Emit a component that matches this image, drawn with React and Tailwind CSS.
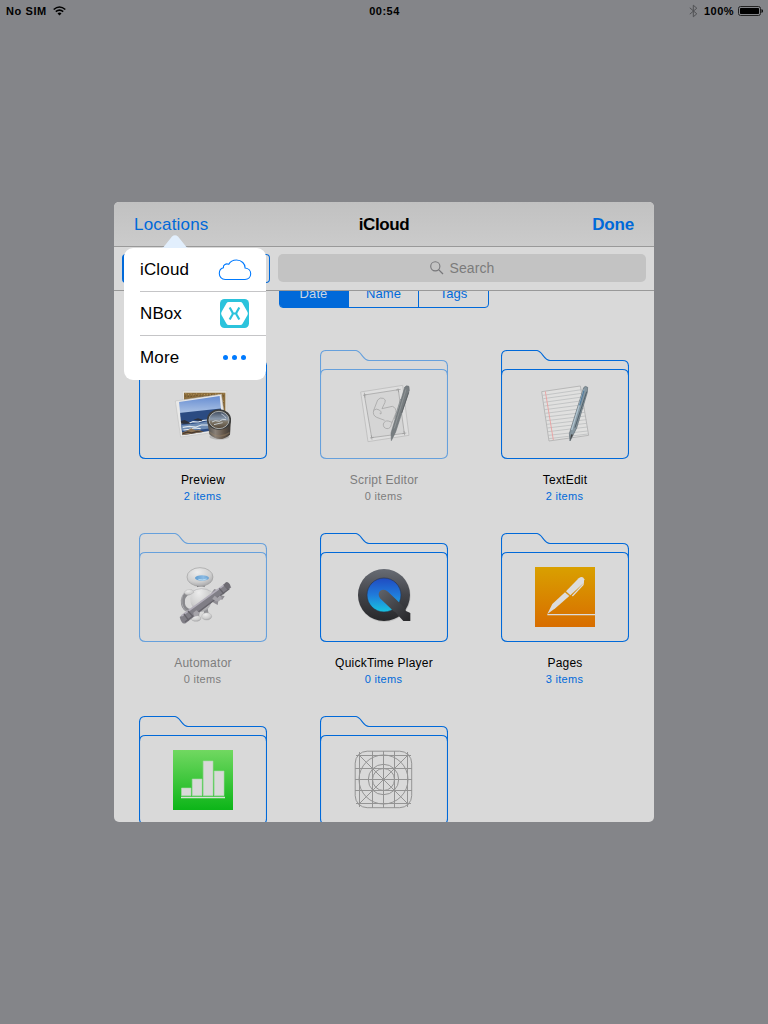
import React from "react";

function FolderShape({ faded, children }) {
  return (
    <svg width="128" height="110" viewBox="0 0 128 110" fill="none" className="block">
      <g stroke={faded ? "#66a0dc" : "#0069d9"} strokeWidth="1.1">
        <path d="M.5 25V6.500Q.5 .5 6.500 .5H35.500C41.500 .5 42.500 10.500 49 10.500H121.500Q127.500 10.500 127.500 16.500V25" />
        <path d="M.5 25.500Q.5 19.500 6.500 19.500H121.500Q127.500 19.500 127.500 25.500V102.500Q127.500 108.500 121.500 108.500H6.500Q.5 108.500 .5 102.500Z" />
      </g>
      {children}
    </svg>
  );
}

function Preview() {
  return (
    <g transform="translate(-9 -10) scale(.33333)">
      <defs>
        <linearGradient id="sky" x1="0" y1="0" x2="0" y2="1">
          <stop offset="0" stopColor="#5b84cf" />
          <stop offset="1" stopColor="#b9cde8" />
        </linearGradient>
        <linearGradient id="loupe" x1="0" y1="0" x2="1" y2="0">
          <stop offset="0" stopColor="#4a4a48" />
          <stop offset=".35" stopColor="#8a8178" />
          <stop offset=".7" stopColor="#625548" />
          <stop offset="1" stopColor="#3b3835" />
        </linearGradient>
        <linearGradient id="glass" x1="0" y1="0" x2="0" y2="1">
          <stop offset="0" stopColor="#3f4a5c" />
          <stop offset=".45" stopColor="#8c9cb0" />
          <stop offset=".6" stopColor="#7f7768" />
          <stop offset="1" stopColor="#54483a" />
        </linearGradient>
        <clipPath id="photo"><path d="M147 186L269 168L279 266L157 286Z" /></clipPath>
      </defs>
      <path d="M157 153L290 152L291 250L160 250Z" fill="#e6e4df" stroke="#c2c2c0" />
      <path d="M162 158H286V245H162Z" fill="#8a6c3c" />
      <path d="M166 160l8 4 7-4 8 5 10-4 8 5 11-5 9 4 10-4 10 5 12-5 10 3 14-3M265 172l8 5 8-3M269 186l10-3 6 5M276 200l8-3" stroke="#b8985c" strokeWidth="3" strokeDasharray="4 5" />
      <path d="M164 168l18 2 20-4 22 4 20-5 38 3M272 178l10 12M274 192l9 8" stroke="#5c4728" strokeWidth="3" strokeDasharray="3 6" />
      <path d="M136 183L274 163L290 272L152 291Z" fill="#e9e9e8" stroke="#bababa" strokeWidth="1.500" />
      <g clipPath="url(#photo)">
        <path d="M140 160H290V230H140Z" fill="url(#sky)" />
        <path d="M140 220L285 204V295H140Z" fill="#2b4b82" />
        <path d="M145 256L190 251L220 247L284 231V260L220 268L150 272Z" fill="#6d8bb2" />
        <path d="M150 251l14-5 15 3 10-4 16 1 12-4 14-2M158 262l20-3 20 2 16-6 22 0M160 270l18-2 14-4 20 2" stroke="#dfe7ee" strokeWidth="3.500" />
        <path d="M148 244l16-4 12 6 6 5-31 0ZM190 239l14-4 14 4-4 4Z" fill="#2d3039" />
        <path d="M150 280l20-8 14-7 12 6 12-1 14 6 20 4-10 20H150Z" fill="#8d7457" />
        <path d="M158 281l15-5 12 3 17-5 18 3" stroke="#4b3b2d" strokeWidth="4" />
      </g>
      <ellipse cx="268" cy="290" rx="30" ry="9" fill="#8e8e8e" opacity=".45" />
      <path d="M231 238L238 283Q268 311 300 284L303 235Z" fill="url(#loupe)" />
      <path d="M237 275Q268 300 299 278" stroke="#a08669" strokeWidth="4" opacity=".4" />
      <ellipse cx="267" cy="239" rx="36" ry="31" fill="#3c3d3d" />
      <ellipse cx="267" cy="240" rx="30" ry="26" fill="url(#glass)" stroke="#a9acab" strokeWidth="3" />
      <path d="M246 246l10-4 12 2 10-6 10 1M252 254l12-3 14-3" stroke="#d3dbe0" strokeWidth="2.500" />
      <path d="M274 222Q284 226 288 234" stroke="#c9d4e2" strokeWidth="3" opacity=".8" />
    </g>
  );
}

function ScriptEditor() {
  return (
    <g transform="translate(-8 -10) scale(.33333)">
      <path d="M146 156L272 136L291 286L168 305Z" fill="#dedede" stroke="#bdbdbd" strokeWidth="2.500" />
      <path d="M157 165L259 149L277 280L179 293Z" fill="#d5d5d5" stroke="#9b9b9b" strokeWidth="2" />
      <path d="M153 166L163 164M157 158L159 173M252 150L266 148M258 145L260 157M174 294L185 292M178 286L180 299M271 281L283 279M276 273L278 286" stroke="#999" strokeWidth="2" />
      <path d="M185 211L197 180Q204 171 214 175Q223 179 219 187L210 206L241 199Q253 203 252 218L238 253Q236 266 225 266Q213 264 214 252Q218 241 229 243L240 247M185 211Q181 226 194 232L218 241M185 211Q192 204 202 210Q210 215 207 222L203 220" stroke="#a4a4a4" strokeWidth="2.300" />
      <path d="M278 142Q282 134 291 139L292 151L251 276L238 302L237 279Z" fill="#777d80" stroke="#686e71" strokeWidth="1.500" />
      <path d="M282 148L247 265M266 177L248 236" stroke="#8f9496" strokeWidth="3" />
      <path d="M290 157L269 219" stroke="#606568" strokeWidth="3" />
    </g>
  );
}

function TextEdit() {
  return (
    <g transform="translate(-8 -10) scale(.33333)">
      <path d="M146 155L262 138L287 286L168 303Z" fill="#e0e0df" stroke="#b0b0b0" strokeWidth="2.500" />
      <path d="M149 166L266 149M151 176L266 160M152 187L268 171M154 198L270 182M155 209L272 194M157 220L274 205M158 231L276 217M160 242L278 228M162 253L280 239M163 264L281 250M165 275L283 261M166 286L284 273M168 296L285 282" stroke="#b2b4b6" strokeWidth="1.900" />
      <path d="M157 154L181 300" stroke="#eb9b9b" strokeWidth="2.500" />
      <path d="M272 143Q276 136 284 142L283 157L251 264L231 303L229 281Z" fill="#86969f" stroke="#5e6971" strokeWidth="2" />
      <path d="M273 149L236 270" stroke="#b0c4d0" strokeWidth="4" />
      <path d="M281 155L246 263" stroke="#52616b" strokeWidth="3" />
      <path d="M260 196L273 151" stroke="#557d9d" strokeWidth="4" />
      <path d="M231 302L234 283L240 284Z" fill="#454545" />
    </g>
  );
}

function Automator() {
  return (
    <g transform="translate(-9 -8) scale(.33333)">
      <defs>
        <radialGradient id="robot" cx=".4" cy=".25" r=".8">
          <stop stopColor="#ececec" /><stop offset=".65" stopColor="#cecece" /><stop offset="1" stopColor="#a3a3a6" />
        </radialGradient>
        <linearGradient id="visor"><stop stopColor="#5f9dd0" /><stop offset=".6" stopColor="#8cbbe4" /><stop offset="1" stopColor="#6ba1cf" /></linearGradient>
      </defs>
      <path d="M178 201Q155 212 159 237Q162 254 181 258" stroke="#89898d" strokeWidth="12" />
      <path d="M171 196Q152 207 156 235Q160 255 174 260" stroke="#b9b9bd" strokeWidth="2" />
      <path d="M192 245L188 276H207L210 248M221 243L222 268H236L232 244" fill="#919195" />
      <ellipse cx="198" cy="280" rx="15" ry="9" fill="url(#robot)" stroke="#a0a0a0" />
      <ellipse cx="230" cy="274" rx="15" ry="11" fill="url(#robot)" stroke="#a0a0a0" />
      <path d="M201 179H224V198H201Z" fill="#737377" />
      <ellipse cx="213" cy="222" rx="32" ry="38" fill="url(#robot)" />
      <path d="M184 201Q214 181 244 200" stroke="#b1b1b3" strokeWidth="2" />
      <path d="M162 203Q167 192 186 194L192 202L181 209Q169 214 162 203Z" fill="url(#robot)" stroke="#aaa" />
      <ellipse cx="210" cy="156" rx="39" ry="28" fill="url(#robot)" stroke="#999" strokeWidth="1.800" />
      <ellipse cx="216" cy="159" rx="21" ry="8.500" fill="url(#visor)" />
      <path d="M205 163Q217 167 230 162" stroke="#bce0f5" strokeWidth="2.500" />
      <path d="M244 204l9-12 9 3 11 6-3 9 14 4-7 10-11-2-3 18-12-7-9-9Z" fill="#8f8d93" />
      <path d="M149 276L290 174L304 187L169 293Q156 303 149 276Z" fill="#807e86" />
      <path d="M154 273L288 176" stroke="#b3afba" strokeWidth="5" />
      <path d="M165 291L298 191" stroke="#67656c" strokeWidth="4" />
      <path d="M281 178L295 194M268 190L282 207M174 258L189 275M162 267L176 286" stroke="#66646b" strokeWidth="4" />
      <path d="M190 263l9-7 10 7-7 10-11 2ZM247 221l7-9 8 6 8-7 6 8-9 10-10 0Z" fill="#a5a3a9" />
      <ellipse cx="292" cy="181" rx="8" ry="10" fill="#6e6c73" transform="rotate(-38 292 181)" />
    </g>
  );
}

function QuickTime() {
  return (
    <g transform="translate(-8 -8) scale(.33333)">
      <defs>
        <linearGradient id="ring" x1="0" y1="0" x2="0" y2="1"><stop stopColor="#686c74" /><stop offset=".5" stopColor="#424348" /><stop offset="1" stopColor="#27282a" /></linearGradient>
        <linearGradient id="lens" x1="0" y1="0" x2="0" y2="1"><stop stopColor="#204bc1" /><stop offset=".5" stopColor="#207bdb" /><stop offset="1" stopColor="#18c4df" /></linearGradient>
        <linearGradient id="qtail" x1="202" y1="194" x2="290" y2="285" gradientUnits="userSpaceOnUse"><stop stopColor="#60636a" /><stop offset="1" stopColor="#29292b" /></linearGradient>
      </defs>
      <circle cx="217" cy="212" r="79" fill="#aaa" opacity=".5" />
      <circle cx="216" cy="210" r="78" fill="url(#ring)" />
      <circle cx="216" cy="210" r="51" fill="url(#lens)" stroke="#29334b" strokeWidth="2" />
      <path d="M204 220Q196 207 204 198Q216 189 228 200L276 246L282 258L295 264V288H274L258 271Q252 260 244 258Z" fill="url(#qtail)" />
    </g>
  );
}

function Pages() {
  return (
    <g>
      <defs><linearGradient id="orange" x1="0" y1="0" x2="0" y2="1"><stop stopColor="#d9a000" /><stop offset="1" stopColor="#d86d00" /></linearGradient></defs>
      <path d="M34 34H94V94H34Z" fill="url(#orange)" />
      <g transform="translate(-8 -8) scale(.33333)">
        <path d="M163 267L178 237L216 202L229 213L187 250Z" fill="#dcdcdc" />
        <path d="M219 199L257 160Q269 151 274 163L272 174L232 211Z" fill="#dcdcdc" />
        <path d="M217 200L231 213" stroke="#d39a2c" strokeWidth="1.500" />
        <path d="M271 163L270 179L238 213" stroke="#dcdcdc" strokeWidth="4" />
        <path d="M163 269H306" stroke="#dcdcdc" strokeWidth="4" />
      </g>
    </g>
  );
}

function Numbers() {
  return (
    <g>
      <defs><linearGradient id="green" x1="0" y1="0" x2="0" y2="1"><stop stopColor="#71d861" /><stop offset="1" stopColor="#0cb518" /></linearGradient></defs>
      <path d="M34 34H94V94H34Z" fill="url(#green)" />
      <path d="M42.500 72H52V79.700H42.500ZM53.200 63H63V79.700H53.200ZM64.200 45H74V79.700H64.200ZM75.200 55H85V79.700H75.200Z" fill="#d9d9d9" stroke="#a9dca7" strokeWidth=".6" />
      <path d="M42 81.500H86" stroke="#d8e3d6" strokeWidth="1.500" />
    </g>
  );
}

function Template() {
  return (
    <g stroke="#949494" strokeWidth="1">
      <rect x="35.200" y="35.200" width="56.500" height="56.500" rx="12" />
      <path d="M39.500 36V91M52.500 35V92M63.500 35V92M74.500 35V92M87.500 36V91M36 39.500H91M35 52.500H92M35 63.500H92M35 74.500H92M36 87.500H91M38.500 38.500L88.500 88.500M88.500 38.500L38.500 88.500" />
      <circle cx="63.500" cy="63.500" r="24.500" />
      <circle cx="63.500" cy="63.500" r="15.200" />
      <circle cx="63.500" cy="63.500" r="11" />
    </g>
  );
}

const folders = [
  { name: "Preview", items: "2 items", Art: Preview },
  { name: "Script Editor", items: "0 items", Art: ScriptEditor, faded: true },
  { name: "TextEdit", items: "2 items", Art: TextEdit },
  { name: "Automator", items: "0 items", Art: Automator, faded: true },
  { name: "QuickTime Player", items: "0 items", Art: QuickTime },
  { name: "Pages", items: "3 items", Art: Pages },
  { name: "Numbers", items: "", Art: Numbers },
  { name: "Other", items: "", Art: Template },
];

function Folder({ name, items, Art, faded }) {
  return (
    <div className="flex h-[183px] flex-col">
      <FolderShape faded={faded}><Art /></FolderShape>
      {items && (
        <div className="-mx-4 pt-[12px] text-center leading-4">
          <div className={faded ? "text-[12px] tracking-[0.26px] text-[#7d7d7d]" : "text-[12px] tracking-[0.22px] text-black"}>{name}</div>
          <div className={faded ? "pr-px text-[11px] tracking-[0.3px] text-[#7d7d7d]" : "pr-px text-[11px] tracking-[0.3px] text-[#0069d9]"}>{items}</div>
        </div>
      )}
    </div>
  );
}

function StatusBar() {
  return (
    <header className="flex h-[22px] items-center justify-between pl-[6px] pr-[5px] text-[11px] font-bold text-black">
      <div className="flex w-40 items-center gap-[6px]">
        <span className="tracking-[0.6px]">No SIM</span>
        <svg width="13" height="10" viewBox="0 0 13 10" fill="none" stroke="#000" strokeWidth="1.600">
          <path d="M.7 3.500Q6.500-1.500 12.300 3.500M2.800 5.700Q6.500 2.500 10.200 5.700" />
          <path d="M4.500 7.400Q6.500 5.700 8.500 7.400L6.500 9.500Z" fill="#000" stroke="none" />
        </svg>
      </div>
      <span className="tracking-[0.5px]">00:54</span>
      <div className="flex w-40 items-center justify-end">
        <svg width="9" height="14" viewBox="0 0 9 14" fill="none" stroke="#505154" strokeWidth="1" className="mr-[6px]"><path d="M.8 3.800L7.800 9.800L4.300 12.800V1.200L7.800 4.200L.8 10.200" /></svg>
        <span className="mr-1 tracking-[0.45px]">100%</span>
        <svg width="25" height="10" viewBox="0 0 25 10"><rect x=".5" y=".5" width="22" height="9" rx="2" fill="none" stroke="#222" /><rect x="2" y="2" width="19" height="6" rx=".7" /><path d="M23.500 3Q25 3.500 25 5T23.500 7Z" /></svg>
      </div>
    </header>
  );
}

function LocationsMenu() {
  return (
    <div className="absolute left-[10px] top-[33px] z-10 w-[142px] text-[17px] text-black">
      <svg width="26" height="13" viewBox="0 0 26 13" className="ml-[38px] block"><path d="M0 13Q2 12 4 9L10 1.500Q13-1.200 16 1.500L22 9Q24 12 26 13Z" fill="#e2effd" /></svg>
      <div className="flex flex-col rounded-[9px] bg-white pl-4">
        <div className="flex h-11 items-center justify-between border-b border-[#c5c5c7] pr-[14px]">
          <span className="tracking-[0.15px]">iCloud</span>
          <svg width="34" height="22" viewBox="0 0 34 22" fill="none" stroke="#007aff" strokeWidth="1.100"><path d="M7.200 20.500C3.500 20.500 1.300 17.500 1.300 14.600C1.300 11.300 3.100 9.200 5.400 8.700C5 5.800 8 4.100 10.800 5.300C12.100 2.700 15 1 18.500 1C23.600 1 27.300 5 27.100 9C30.600 9.300 32.700 11.900 32.700 14.800C32.700 18.100 30.300 20.500 27 20.500Z" /></svg>
        </div>
        <div className="flex h-11 items-center justify-between border-b border-[#c5c5c7] pr-4">
          <span className="tracking-[0.1px]">NBox</span>
          <svg width="30" height="30" viewBox="0.5 0.5 30 30"><rect x=".5" y=".5" width="29" height="29" rx="4.500" fill="#2bc3dc" /><path d="M9.200 3.500H20.800Q22.300 3.500 23 4.800L28 13.500Q28.700 15 28 16.500L23 25.200Q22.300 26.500 20.800 26.500H9.200Q7.700 26.500 7 25.200L2 16.500Q1.300 15 2 13.500L7 4.800Q7.700 3.500 9.200 3.500Z" fill="#fff" /><path d="M10.200 9L13 14Q13.500 15 13 16L10.200 21M19.800 9L17 14Q16.500 15 17 16L19.800 21M13.300 15H16.700" fill="none" stroke="#2bc3dc" strokeWidth="2.200" /></svg>
        </div>
        <div className="flex h-11 items-center justify-between pr-5">
          <span className="tracking-[0.15px]">More</span>
          <div className="flex gap-1 pb-[2px]"><i className="size-[5px] rounded-full bg-[#007aff]" /><i className="size-[5px] rounded-full bg-[#007aff]" /><i className="size-[5px] rounded-full bg-[#007aff]" /></div>
        </div>
      </div>
    </div>
  );
}

export default function App() {
  return (
    <div className="flex h-[1024px] w-[768px] flex-col bg-[#848589] font-['Liberation_Sans',sans-serif]">
      <StatusBar />
      <main className="relative mx-auto mt-[180px] h-[620px] w-[540px] overflow-hidden rounded-[5px] bg-[#d9d9d9]">
        <div className="grid h-[45px] grid-cols-3 items-center border-b border-[#999] bg-linear-to-b from-[#c1c1c1] to-[#cbcbcb] px-5 pt-[2px] text-[17px]">
          <span className="tracking-[0.2px] text-[#0069d9]">Locations</span>
          <span className="text-center font-bold tracking-[-0.4px] text-black">iCloud</span>
          <span className="text-right font-bold tracking-[-0.2px] text-[#0069d9]">Done</span>
        </div>
        <div className="flex h-11 items-start gap-2 border-b border-[#999] px-2 pt-[7px]">
          <div className="h-[29px] w-[148px] rounded-[4px] border border-l-2 border-[#0069d9]" />
          <div className="flex h-7 flex-1 items-center justify-center rounded-[5px] bg-[#c3c3c3] text-[14px] text-[#7b7b7b]">
            <svg width="14" height="14" viewBox="0 0 14 14" fill="none" stroke="#77777a" strokeWidth="1.100" className="mr-[6px]"><circle cx="5.300" cy="5.300" r="4.600" /><path d="M8.600 8.600L13 13" strokeWidth="1.300" /></svg>
            <span className="tracking-[0.1px]">Search</span>
          </div>
        </div>
        <div className="h-[531px] overflow-hidden">
          <div className="mx-auto -mt-[12px] flex h-[29px] w-[210px] rounded-[4px] border border-[#0069d9] text-[13px] leading-[28px] text-[#0069d9]">
            <div className="w-[69px] rounded-l-[2px] bg-[#0069d9] pr-[2px] text-center tracking-[0.1px] text-[#c9d5e3]">Date</div>
            <div className="w-[70px] border-r border-[#0069d9] text-center tracking-[0.1px]">Name</div>
            <div className="w-[69px] text-center">Tags</div>
          </div>
          <div className="grid grid-cols-[repeat(3,128px)] gap-x-[53px] px-[25px] pt-[42px]">
            {folders.map((folder) => <Folder key={folder.name} {...folder} />)}
          </div>
        </div>
        <LocationsMenu />
      </main>
    </div>
  );
}
